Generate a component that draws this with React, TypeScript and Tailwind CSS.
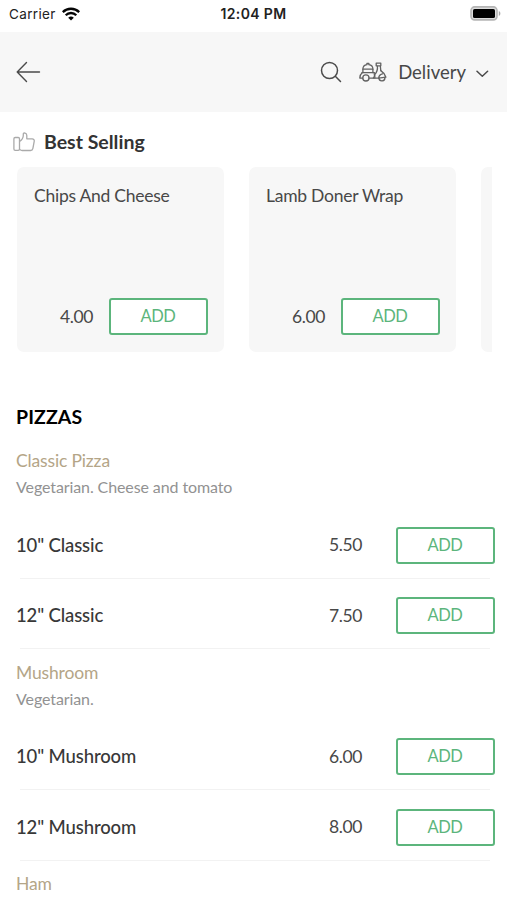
import React from "react";

type Item = { name: string; price: string };
type Group = { title: string; description: string; items: Item[] };

const bestSelling: Item[] = [
  { name: "Chips And Cheese", price: "4.00" },
  { name: "Lamb Doner Wrap", price: "6.00" },
];

const groups: Group[] = [
  {
    title: "Classic Pizza",
    description: "Vegetarian. Cheese and tomato",
    items: [
      { name: '10" Classic', price: "5.50" },
      { name: '12" Classic', price: "7.50" },
    ],
  },
  {
    title: "Mushroom",
    description: "Vegetarian.",
    items: [
      { name: '10" Mushroom', price: "6.00" },
      { name: '12" Mushroom', price: "8.00" },
    ],
  },
  { title: "Ham", description: "", items: [] },
];

function AddButton() {
  return (
    <button className="h-[37px] w-[99px] shrink-0 rounded-[3px] border-2 border-[#5cb57c] bg-white pr-px text-[16.5px] leading-[33px] tracking-[-0.4px] text-[#5cb57c]">
      ADD
    </button>
  );
}

function StatusBar() {
  return (
    <div className="grid h-8 grid-cols-3 items-start bg-white font-[Inter,sans-serif] text-[#222]">
      <div className="flex h-[27px] items-center gap-[6px] pl-[9px] text-[13.5px] tracking-[0.35px]">
        <span className="pt-px">Carrier</span>
        <svg width="18" height="14" viewBox="0 0 18 14" fill="none" stroke="#050505" strokeWidth="2.3">
          <path d="M.8 5.1a11.7 11.7 0 0 1 16.4 0" />
          <path d="M3.7 8.2a7.5 7.5 0 0 1 10.6 0" />
          <path d="M6.2 10.8a4 4 0 0 1 5.6 0L9 13.6Z" fill="#050505" stroke="none" />
        </svg>
      </div>
      <div className="flex h-[27px] items-center justify-center text-[14px] font-semibold tracking-[0.35px]">12:04 PM</div>
      <div className="flex h-[26px] items-center justify-end pr-[6px]">
        <svg width="31" height="15" viewBox="0 0 31 15">
          <rect x="1" y=".9" width="26" height="13" rx="3.6" fill="#ddd" stroke="#b5b5b5" strokeWidth="1.6" />
          <rect x="3" y="3" width="22" height="9" rx="1.6" fill="#000" />
          <path d="M28.8 5v5c1-.4 1.6-1.4 1.6-2.5S29.8 5.400 28.800 5Z" fill="#aaa" />
        </svg>
      </div>
    </div>
  );
}

function ScooterIcon() {
  return (
    <svg width="28" height="20" viewBox="0 0 28 20" fill="none" stroke="#626262" strokeWidth="1.3" strokeLinejoin="round" strokeLinecap="round">
      <path d="M3.900 10.500V7.200C3.900 4.800 5.700 3 7.900 2.700V1.500h2v1.200c2.200.3 4 2.100 4 4.500v3.300" />
      <path d="M3.900 7.200h10M3 10.700h12.200" />
      <path d="M3.200 10.700C1.500 12 .8 14 .8 16.100h2.900M15.200 10.700c.6 2 .3 4-.9 5.400" />
      <circle cx="6.900" cy="15.900" r="3.100" />
      <path d="M10 16.100h9.800" />
      <path d="M17.200 1.200h4.600v2.600h-3.200M17.200 1.200v2.600h1.200c.4 3.800-.6 6.700-2.600 8.700v3.600M21.300 3.800l.5 4.800" />
      <path d="M21.800 8.600c2.500 1.600 4.300 3.900 5.100 6.600l-7.200 1c0-2.200 1.300-3.600 3.700-4.300" />
      <path d="M19.900 16.200a3 3 0 0 0 6-.7" />
    </svg>
  );
}

function Header() {
  return (
    <header className="flex h-20 items-center bg-[#f7f7f7] pl-4 pr-[18px] text-[#484848]">
      <svg width="25" height="22" viewBox="0 0 25 22" fill="none" stroke="#4b4b4b" strokeWidth="1.4" strokeLinecap="round" strokeLinejoin="round">
        <path d="M23.5 11H1.200M10.500 1.500 1.200 11l9.300 9.500" />
      </svg>
      <svg className="ml-auto" width="22" height="22" viewBox="0 0 22 22" fill="none" stroke="#4b4b4b" strokeWidth="1.500" strokeLinecap="round">
        <circle cx="9.500" cy="9.500" r="8" />
        <path d="m15.300 15.300 5.200 5.200" />
      </svg>
      <div className="ml-[17px] flex items-center">
        <ScooterIcon />
        <span className="ml-[11px] mt-[2px] text-[18.500px]">Delivery</span>
        <svg className="ml-[10px] mt-[4px]" width="13" height="8" viewBox="0 0 13 8" fill="none" stroke="#4b4b4b" strokeWidth="1.500" strokeLinecap="round" strokeLinejoin="round">
          <path d="m1 1.200 5.300 5L11.600 1.200" />
        </svg>
      </div>
    </header>
  );
}

function BestSelling() {
  return (
    <section>
      <div className="flex h-[55px] items-center gap-[9px] pl-[13px] pt-[5px]">
        <svg width="22" height="20" viewBox="0 0 22 20" fill="none" stroke="#aaa" strokeWidth="1.300" strokeLinejoin="round">
          <rect x=".9" y="5.500" width="5.600" height="12.800" rx="1.300" />
          <path d="M6.500 9.500c2-1.200 3.800-3.500 3.800-6.200V2c0-1.500 3.500-1.600 3.500 1.500v3.300h5.400c1.500 0 2.300 1.100 2 2.600l-1.300 7c-.3 1.500-1 2.100-2.300 2.100H9.200c-1.300 0-1.800-.5-2.700-1.200" />
        </svg>
        <h2 className="text-[19.500px] font-bold text-[#333]">Best Selling</h2>
      </div>
      <div className="ml-[17px] flex w-[475px] gap-[25px] overflow-hidden">
        {bestSelling.map((item) => (
          <article key={item.name} className="flex h-[185px] w-[207px] shrink-0 flex-col justify-between rounded-[7px] bg-[#f7f7f7] pb-[17px] pl-[17px] pr-4 pt-4 text-[#484848]">
            <h3 className="text-[17.500px] leading-[25px] tracking-[-0.25px]">{item.name}</h3>
            <div className="flex items-center justify-end gap-[16px]">
              <span className="pt-px text-[17.500px] tracking-[-0.4px]">{item.price}</span>
              <AddButton />
            </div>
          </article>
        ))}
        <article className="h-[185px] w-[207px] shrink-0 rounded-[7px] bg-[#f7f7f7]" />
      </div>
    </section>
  );
}

function MenuRow({ item }: { item: Item }) {
  return (
    <div className="flex h-[70.500px] items-center pt-[4px]">
      <span className="flex-1 pt-px text-[18.500px] font-medium tracking-[-0.13px] text-[#383838]">{item.name}</span>
      <span className="mr-[34px] text-[17.500px] tracking-[-0.4px] text-[#484848]">{item.price}</span>
      <AddButton />
    </div>
  );
}

function MenuGroup({ group }: { group: Group }) {
  return (
    <section className="h-[211.500px]">
      <div className="h-[67px] pt-[7px]">
        <h3 className="text-[17.500px] leading-[26px] tracking-[-0.15px] text-[#b4a587]">{group.title}</h3>
        <p className="text-[16px] leading-[25px] tracking-[-0.1px] text-[#929292]">{group.description}</p>
      </div>
      {group.items.map((item) => (
        <React.Fragment key={item.name}>
          <MenuRow item={item} />
          <div className="-mt-px ml-[4px] mr-[5px] h-px bg-[#f2f2f2]" />
        </React.Fragment>
      ))}
    </section>
  );
}

export default function App() {
  return (
    <main className="h-[900px] w-[507px] overflow-hidden bg-white font-[Lato,sans-serif]">
      <StatusBar />
      <Header />
      <BestSelling />
      <div className="pl-4 pr-3">
        <h2 className="mt-[51px] h-[38px] text-[19.500px] font-bold leading-[28px] tracking-[0.1px] text-black">PIZZAS</h2>
        {groups.map((group) => (
          <MenuGroup key={group.title} group={group} />
        ))}
      </div>
    </main>
  );
}
